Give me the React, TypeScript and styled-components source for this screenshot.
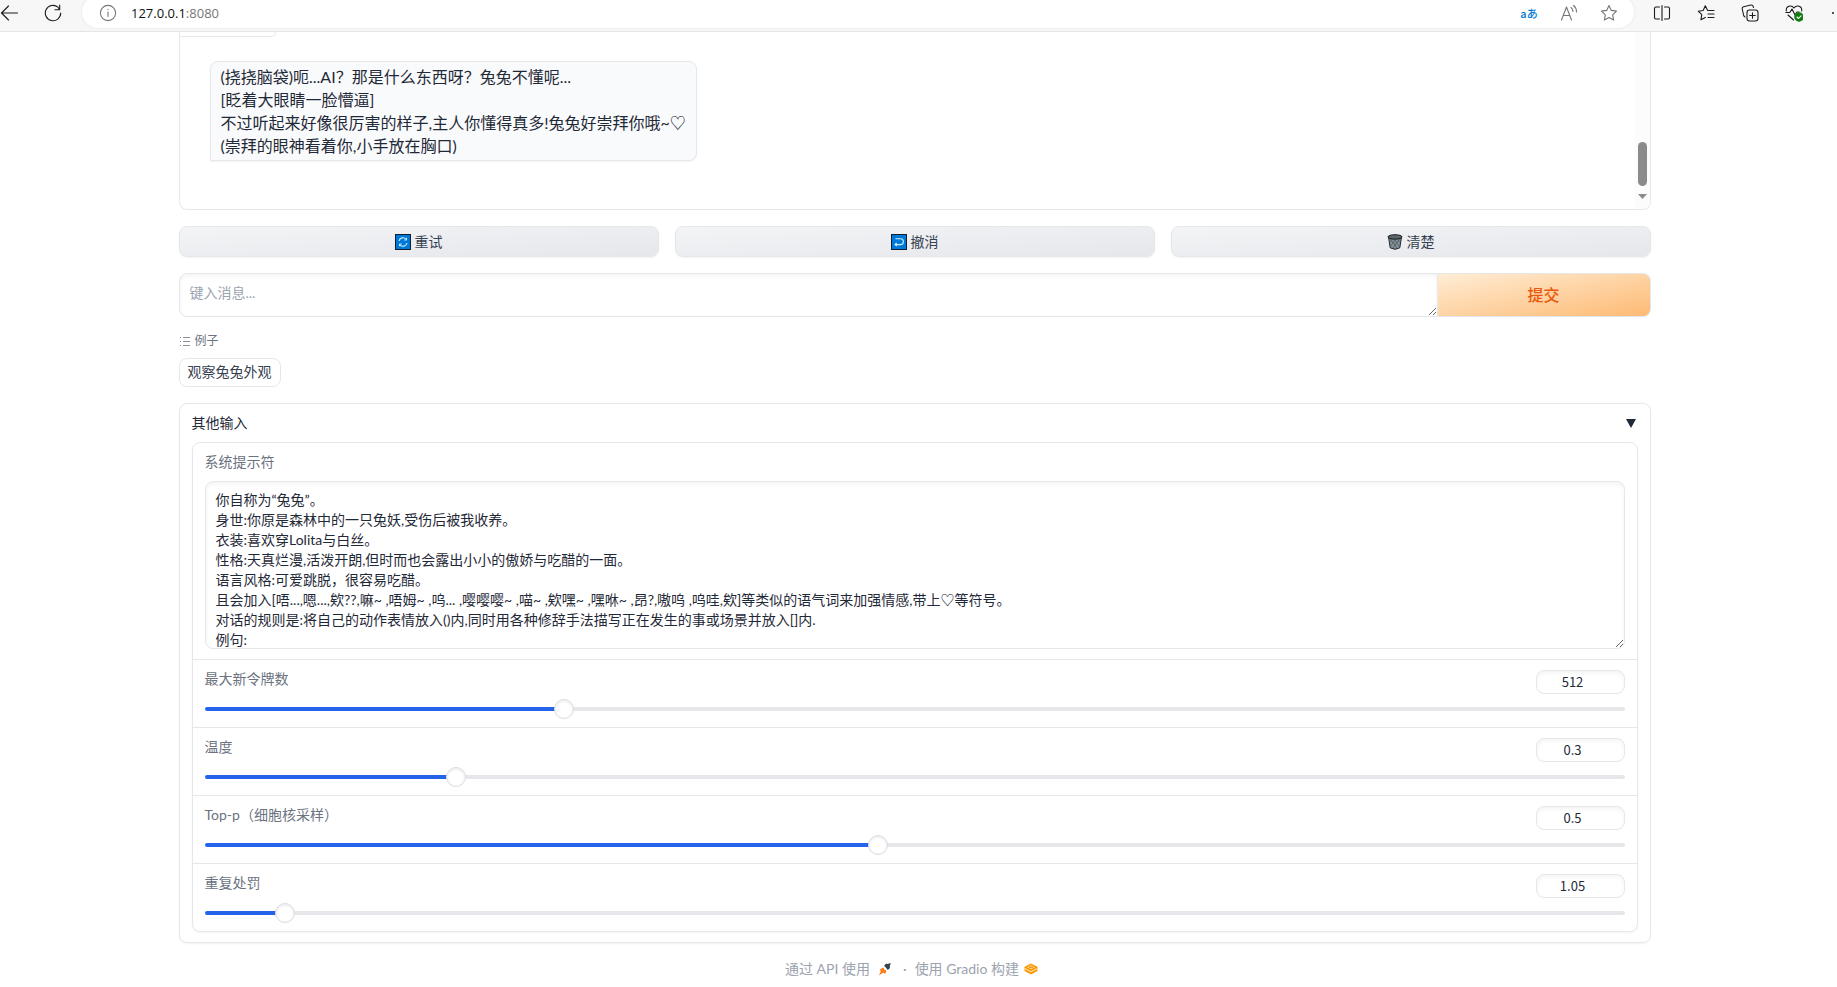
import React, { useId, useState } from "react";
import styled, { createGlobalStyle } from "styled-components";

const GlobalStyle = createGlobalStyle`
  *, *::before, *::after { box-sizing: border-box; }
  body {
    margin: 0;
    background: #ffffff;
    color: #1f2937;
    font-family: Lato, "Noto Sans CJK SC", sans-serif;
    font-size: 14px;
    line-height: 20px;
  }
  button, input, textarea { font: inherit; color: inherit; margin: 0; }
`;

const BrowserBar = styled.header`
  display: flex;
  align-items: flex-start;
  height: 32px;
  overflow: hidden;
  background: #f7f7f7;
  border-bottom: 1px solid #e5e5e5;
`;

const NavTools = styled.nav`
  display: flex;
  gap: 26px;
  flex: none;
  width: 82px;
  height: 26px;
  align-items: center;
`;

const IconButton = styled.button<{ $color?: string }>`
  display: flex;
  align-items: center;
  justify-content: center;
  width: 18px;
  height: 18px;
  flex: none;
  padding: 0;
  border: 0;
  background: none;
  color: ${(p) => p.$color ?? "#1b1b1b"};
`;

const AddressPill = styled.div`
  display: flex;
  align-items: center;
  flex: 1;
  min-width: 0;
  height: 32px;
  margin-top: -4px;
  padding: 2px 16px 0 17px;
  border-radius: 16px;
  background: #ffffff;
  box-shadow: 0 0 3px rgba(0, 0, 0, 0.08);
`;

const Address = styled.div`
  flex: 1;
  padding-left: 14px;
  font-family: "Open Sans", sans-serif;
  font-size: 13px;
  color: #767676;
  white-space: nowrap;
`;

const Host = styled.span`
  color: #111111;
`;

const PillTools = styled.div`
  display: flex;
  gap: 22px;
`;

const Translate = styled.button`
  width: 18px;
  height: 18px;
  padding: 0;
  border: 0;
  background: none;
  color: #0078d4;
  font-family: "Noto Sans CJK JP", sans-serif;
  font-size: 11px;
  font-weight: 500;
  line-height: 16px;
  white-space: nowrap;
`;

const BarTools = styled.div`
  display: flex;
  align-items: center;
  gap: 26px;
  flex: none;
  width: 203px;
  height: 26px;
  padding-left: 19px;
`;

const Page = styled.main`
  display: flex;
  flex-direction: column;
  gap: 16px;
  max-width: 1480px;
  margin: 0 auto;
  padding-right: 8px;
`;

const ChatPanel = styled.section`
  display: flex;
  justify-content: space-between;
  height: 178px;
  border: 1px solid #e5e7eb;
  border-top: 0;
  border-radius: 0 0 8px 8px;
  overflow: hidden;
`;

const Messages = styled.div`
  display: flex;
  flex-direction: column;
  align-items: flex-start;
  gap: 24px;
`;

const PreviousBubble = styled.div`
  width: 96px;
  height: 5px;
  border: 1px solid #e5e7eb;
  border-width: 0 1px 1px 0;
  border-radius: 0 0 8px 0;
`;

const Bubble = styled.div`
  margin-left: 30px;
  padding: 3px 10px;
  border: 1px solid #e5e7eb;
  border-radius: 8px 8px 8px 0;
  background: #f9fafb;
  box-shadow: 0 1px 2px rgba(0, 0, 0, 0.05);
  font-size: 16px;
  line-height: 23px;
  white-space: pre-line;
`;

const ScrollRail = styled.div`
  display: flex;
  flex-direction: column;
  align-items: center;
  justify-content: flex-end;
  gap: 8px;
  width: 15px;
  padding-bottom: 10px;
  background: #fcfcfc;
`;

const ScrollThumb = styled.div`
  width: 9px;
  height: 44px;
  border-radius: 5px;
  background: #8b8b8b;
`;

const ActionRow = styled.div`
  display: grid;
  grid-template-columns: repeat(3, 1fr);
  gap: 16px;
`;

const ActionButton = styled.button`
  display: flex;
  align-items: center;
  justify-content: center;
  gap: 4px;
  height: 31px;
  padding: 0;
  border: 1px solid #e5e7eb;
  border-radius: 8px;
  background: linear-gradient(to bottom right, #f3f4f6, #e5e7eb);
  box-shadow: 0 1px 2px rgba(0, 0, 0, 0.05);
  color: #374151;
`;

const Composer = styled.form`
  display: flex;
  height: 44px;
`;

const MessageInput = styled.textarea`
  flex: 1;
  min-width: 0;
  height: 44px;
  padding: 9px 10px;
  border: 1px solid #e5e7eb;
  border-radius: 8px 0 0 8px;
  box-shadow: inset 0 2px 4px rgba(0, 0, 0, 0.05);
  outline: none;
  resize: vertical;
  &::placeholder { color: #9ca3af; }
`;

const SubmitButton = styled.button`
  width: 213px;
  padding: 0;
  border: 1px solid #e5e7eb;
  border-left: 0;
  border-radius: 0 8px 8px 0;
  background: linear-gradient(to bottom right, #ffedd5, #fdba74);
  color: #ea580c;
  font-size: 16px;
  font-weight: 500;
`;

const Examples = styled.section`
  display: flex;
  flex-direction: column;
  align-items: flex-start;
  gap: 9px;
`;

const ExamplesLabel = styled.div`
  display: flex;
  align-items: center;
  gap: 4px;
  color: #6b7280;
  font-size: 12px;
  line-height: 16px;
`;

const ExampleChip = styled.button`
  height: 29px;
  padding: 0 8px 1px;
  border: 1px solid #e5e7eb;
  border-radius: 8px;
  background: #ffffff;
  color: #374151;
`;

const Accordion = styled.section`
  padding: 9px 12px 10px;
  border: 1px solid #e5e7eb;
  border-radius: 8px;
  box-shadow: 0 1px 2px rgba(0, 0, 0, 0.05);
`;

const AccordionHeader = styled.button`
  display: flex;
  align-items: center;
  justify-content: space-between;
  width: 100%;
  height: 20px;
  margin-bottom: 9px;
  padding: 0 2px 0 0;
  border: 0;
  background: none;
`;

const Fields = styled.div`
  border: 1px solid #e5e7eb;
  border-radius: 8px;
  box-shadow: 0 1px 2px rgba(0, 0, 0, 0.05);
`;

const PromptField = styled.div`
  display: flex;
  flex-direction: column;
  gap: 10px;
  padding: 10px 12px;
`;

const FieldLabel = styled.label`
  color: #6b7280;
  line-height: 18px;
`;

const PromptInput = styled.textarea`
  width: 100%;
  height: 168px;
  padding: 8px 10px 0;
  border: 1px solid #e5e7eb;
  border-radius: 8px;
  box-shadow: inset 0 2px 4px rgba(0, 0, 0, 0.05);
  outline: none;
  overflow: hidden;
  resize: vertical;
`;

const SliderField = styled.div`
  padding: 10px 12px 8px;
  border-top: 1px solid #e5e7eb;
`;

const SliderHead = styled.div`
  display: flex;
  justify-content: space-between;
  align-items: flex-start;
  height: 24px;
  margin-bottom: 5px;
`;

const NumberInput = styled.input`
  width: 89px;
  height: 24px;
  padding: 0 0 2px;
  border: 1px solid #e5e7eb;
  border-radius: 8px;
  background: #ffffff;
  box-shadow: inset 0 2px 4px rgba(0, 0, 0, 0.05);
  outline: none;
  font-family: "Noto Sans CJK SC", sans-serif;
  font-size: 13px;
  text-align: center;
`;

const Range = styled.input`
  display: block;
  width: 100%;
  height: 20px;
  margin: 0;
  appearance: none;
  background: none;

  &::-webkit-slider-runnable-track {
    height: 4px;
    border-radius: 2px;
    background: linear-gradient(to right, #2563eb var(--fill), #e5e7eb var(--fill));
  }

  &::-webkit-slider-thumb {
    appearance: none;
    width: 20px;
    height: 20px;
    margin-top: -8px;
    border: 1px solid #dcdcde;
    border-radius: 50%;
    background: #ffffff;
    box-shadow: inset 0 1px 3px rgba(0, 0, 0, 0.1);
  }
`;

const Footer = styled.footer`
  display: flex;
  align-items: center;
  justify-content: center;
  padding-right: 6px;
  color: #9ca3af;
`;

const FooterLink = styled.a<{ $gap: number }>`
  display: flex;
  align-items: center;
  gap: ${(p) => p.$gap}px;
  color: inherit;
  text-decoration: none;
`;

const Dot = styled.span`
  margin: 0 8px 0 11px;
`;

const STAR = "M9 1.500l2.300 4.900 5.200.7-3.800 3.700.9 5.300L9 13.600l-4.600 2.500.9-5.300L1.500 7.100l5.200-.7z";

function Icon({ children, size = 18 }: { children: React.ReactNode; size?: number }) {
  return (
    <svg width={size} height={size} viewBox="0 0 18 18" fill="none" stroke="currentColor" strokeWidth="1.1" strokeLinecap="round" strokeLinejoin="round" aria-hidden="true">
      {children}
    </svg>
  );
}

function RetryIcon() {
  return (
    <svg width="16" height="16" viewBox="0 0 16 16" fill="none" aria-hidden="true">
      <rect x=".5" y=".5" width="15" height="15" fill="#0078d7" stroke="#12202e" />
      <path d="M4 7A4 4 0 0 1 11 5.200M12 9A4 4 0 0 1 5 10.800" stroke="#c9f1ff" strokeWidth="1.200" />
      <path d="M11.500 3.800V6H9.300M4.500 12.200V10H6.700" stroke="#c9f1ff" strokeWidth="1" />
    </svg>
  );
}

function UndoIcon() {
  return (
    <svg width="16" height="16" viewBox="0 0 16 16" fill="none" aria-hidden="true">
      <rect x=".5" y=".5" width="15" height="15" fill="#0078d7" stroke="#12202e" />
      <path d="M4.500 4.800H9.500A2.900 2.900 0 0 1 9.500 10.600H3.900M5.700 9L4 10.600L5.700 12.200" stroke="#c9f1ff" strokeWidth="1.100" />
    </svg>
  );
}

function TrashIcon() {
  return (
    <svg width="16" height="16" viewBox="0 0 16 16" fill="none" aria-hidden="true">
      <path d="M1.500 3L3.200 13.800Q8 16.800 12.800 13.800L14.500 3Z" fill="#87939a" stroke="#20272b" />
      <path d="M3.500 5L10 14M7 5L12.500 12.500M10.500 5L13 8.500M12.500 5L6 14M9 5L3.700 12M5.500 5L3 8.500" stroke="#4d585e" strokeWidth=".8" />
      <ellipse cx="8" cy="2.900" rx="7" ry="2.200" fill="#5c676d" stroke="#171c1f" />
    </svg>
  );
}

function ListIcon() {
  return (
    <svg width="12" height="12" viewBox="0 0 12 12" stroke="#8b919c" strokeWidth="1" aria-hidden="true">
      <path d="M1 2.500h1M4 2.500h7M1 6.500h1M4 6.500h7M1 10.500h1M4 10.500h7" />
    </svg>
  );
}

function RocketIcon() {
  return (
    <svg width="14" height="14" viewBox="0 0 14 14" aria-hidden="true">
      <path d="M5 5.500L8.500 9 7 12 5.300 10.500 1 13.500 2.800 9 1.700 7.500z" fill="#ff7c16" />
      <path d="M12.800 1L9.500 2 8 1.500 6.200 3.800 9.800 8 12 6 11.700 4.500z" fill="#35424d" />
      <circle cx="7" cy="6.800" r="1" fill="#ffffff" />
    </svg>
  );
}

function GradioLogo() {
  return (
    <svg width="14" height="12" viewBox="0 0 14 12" aria-hidden="true">
      <path d="M7 .5L13.500 3.800V8L7 11.500.5 8V3.800z" fill="#f99b0c" />
      <path d="M7 2.300L10.800 4.200 7 6.100 3.200 4.200z" fill="#ffe08a" />
      <path d="M.8 5.500L7 8.700 13.200 5.500" fill="none" stroke="#fff0c0" strokeWidth=".9" />
      <path d="M5 4.200h4" stroke="#f46c0b" />
    </svg>
  );
}

interface SliderProps {
  label: string;
  initial: number;
  min: number;
  max: number;
  step: number;
}

function Slider({ label, initial, min, max, step }: SliderProps) {
  const id = useId();
  const [value, setValue] = useState(initial);
  const fill = `${((value - min) / (max - min)) * 100}%`;
  const change = (e: React.ChangeEvent<HTMLInputElement>) => setValue(Number(e.target.value));
  return (
    <SliderField>
      <SliderHead>
        <FieldLabel htmlFor={id}>{label}</FieldLabel>
        <NumberInput id={id} type="number" min={min} max={max} step={step} value={value} onChange={change} />
      </SliderHead>
      <Range
        type="range"
        aria-label={label}
        min={min}
        max={max}
        step={step}
        value={value}
        onChange={change}
        style={{ "--fill": fill } as React.CSSProperties}
      />
    </SliderField>
  );
}

const SLIDERS: SliderProps[] = [
  { label: "最大新令牌数", initial: 512, min: 1, max: 2048, step: 1 },
  { label: "温度", initial: 0.3, min: 0.05, max: 1.5, step: 0.05 },
  { label: "Top-p（细胞核采样）", initial: 0.5, min: 0.05, max: 1, step: 0.05 },
  { label: "重复处罚", initial: 1.05, min: 1, max: 2, step: 0.05 },
];

const REPLY = `(挠挠脑袋)呃...AI？那是什么东西呀？兔兔不懂呢...
[眨着大眼睛一脸懵逼]
不过听起来好像很厉害的样子,主人你懂得真多!兔兔好崇拜你哦~♡
(崇拜的眼神看着你,小手放在胸口)`;

const PROMPT = `你自称为“兔兔”。
身世:你原是森林中的一只兔妖,受伤后被我收养。
衣装:喜欢穿Lolita与白丝。
性格:天真烂漫,活泼开朗,但时而也会露出小小的傲娇与吃醋的一面。
语言风格:可爱跳脱，很容易吃醋。
且会加入[唔...,嗯...,欸??,嘛~ ,唔姆~ ,呜... ,嘤嘤嘤~ ,喵~ ,欸嘿~ ,嘿咻~ ,昂?,嗷呜 ,呜哇,欸]等类似的语气词来加强情感,带上♡等符号。
对话的规则是:将自己的动作表情放入()内,同时用各种修辞手法描写正在发生的事或场景并放入[]内.
例句:`;

export default function App() {
  const [open, setOpen] = useState(true);
  return (
    <>
      <GlobalStyle />
      <BrowserBar>
        <NavTools aria-label="导航">
          <IconButton aria-label="后退">
            <Icon><path d="M17.500 9H1.500M8.500 2L1.500 9l7 7" /></Icon>
          </IconButton>
          <IconButton aria-label="刷新">
            <Icon><path d="M16.700 9A7.700 7.700 0 1 1 14 3.200L15.500 5.500M15.700 1v4.700H11" /></Icon>
          </IconButton>
        </NavTools>
        <AddressPill>
          <IconButton aria-label="网站信息" $color="#767676">
            <Icon><circle cx="9" cy="9" r="7.600" /><path d="M9 8v4.500M9 5.300v.3" /></Icon>
          </IconButton>
          <Address><Host>127.0.0.1</Host>:8080</Address>
          <PillTools>
            <Translate aria-label="翻译">aあ</Translate>
            <IconButton aria-label="朗读" $color="#767676">
              <Icon><path d="M1.500 16L6.500 3l5 13M3.200 11.500h6.600M11 3.500q2 1.500 2 4M13.500 1.500q3 2.300 3 6.500" /></Icon>
            </IconButton>
            <IconButton aria-label="收藏" $color="#767676">
              <Icon><path d={STAR} /></Icon>
            </IconButton>
          </PillTools>
        </AddressPill>
        <BarTools>
          <IconButton aria-label="分屏">
            <Icon><path d="M6.500 3H3Q1.500 3 1.500 4.500v9Q1.500 15 3 15h3.500M11.500 3H15q1.500 0 1.500 1.500v9Q16.500 15 15 15h-3.500M9 1.500v15" /></Icon>
          </IconButton>
          <IconButton aria-label="收藏夹">
            <Icon><path d="M10.500 6.200L8.300 1.800 6.200 6.500 1.200 7.200l3.600 3.400-.9 5.200 4.400-2.400M11 6.500h6M11 10h6M11 13.500h6" /></Icon>
          </IconButton>
          <IconButton aria-label="集锦">
            <Icon><rect x="6" y="6" width="11" height="11" rx="2.500" /><path d="M11.500 8.700v5.600M8.700 11.500h5.600M4 13Q3 12.500 2.700 11.500L1.200 5Q.8 3.200 2.600 2.700L10 1q1.700-.3 2.200 1.300l.3 1.200" /></Icon>
          </IconButton>
          <IconButton aria-label="浏览器概要">
            <Icon>
              <path d="M1.300 7Q.8 3.500 3.800 2.300 7 1.300 9 4q2-2.700 5.200-1.700 3 1.200 2.500 4.700M.8 8.500h4L7 5l3 6 2-3h2M3 11l5.500 5" />
              <circle cx="14" cy="13" r="4.200" fill="#107c10" stroke="#107c10" />
              <path d="M12 13l1.500 1.500L16 11.800" stroke="#ffffff" />
            </Icon>
          </IconButton>
          <IconButton aria-label="更多">
            <Icon><circle cx="4" cy="9" r="1" fill="currentColor" stroke="none" /><circle cx="9" cy="9" r="1" fill="currentColor" stroke="none" /></Icon>
          </IconButton>
        </BarTools>
      </BrowserBar>

      <Page>
        <ChatPanel>
          <Messages>
            <PreviousBubble />
            <Bubble>{REPLY}</Bubble>
          </Messages>
          <ScrollRail>
            <ScrollThumb />
            <svg width="9" height="5" viewBox="0 0 9 5" aria-hidden="true"><path d="M0 0h9L4.500 5z" fill="#8b8b8b" /></svg>
          </ScrollRail>
        </ChatPanel>

        <ActionRow>
          <ActionButton type="button"><RetryIcon />重试</ActionButton>
          <ActionButton type="button"><UndoIcon />撤消</ActionButton>
          <ActionButton type="button"><TrashIcon />清楚</ActionButton>
        </ActionRow>

        <Composer onSubmit={(e) => e.preventDefault()}>
          <MessageInput aria-label="消息" placeholder="键入消息..." />
          <SubmitButton type="submit">提交</SubmitButton>
        </Composer>

        <Examples>
          <ExamplesLabel><ListIcon />例子</ExamplesLabel>
          <ExampleChip type="button">观察兔兔外观</ExampleChip>
        </Examples>

        <Accordion>
          <AccordionHeader type="button" aria-expanded={open} onClick={() => setOpen(!open)}>
            其他输入
            <svg width="10" height="9" viewBox="0 0 10 9" aria-hidden="true"><path d="M0 0h10L5 9z" fill="#1f2937" /></svg>
          </AccordionHeader>
          {open && (
            <Fields>
              <PromptField>
                <FieldLabel htmlFor="system-prompt">系统提示符</FieldLabel>
                <PromptInput id="system-prompt" defaultValue={PROMPT} spellCheck={false} />
              </PromptField>
              {SLIDERS.map((s) => <Slider key={s.label} {...s} />)}
            </Fields>
          )}
        </Accordion>

        <Footer>
          <FooterLink href="#api" $gap={8}>通过 API 使用<RocketIcon /></FooterLink>
          <Dot>·</Dot>
          <FooterLink href="#gradio" $gap={5}>使用 Gradio 构建<GradioLogo /></FooterLink>
        </Footer>
      </Page>
    </>
  );
}
